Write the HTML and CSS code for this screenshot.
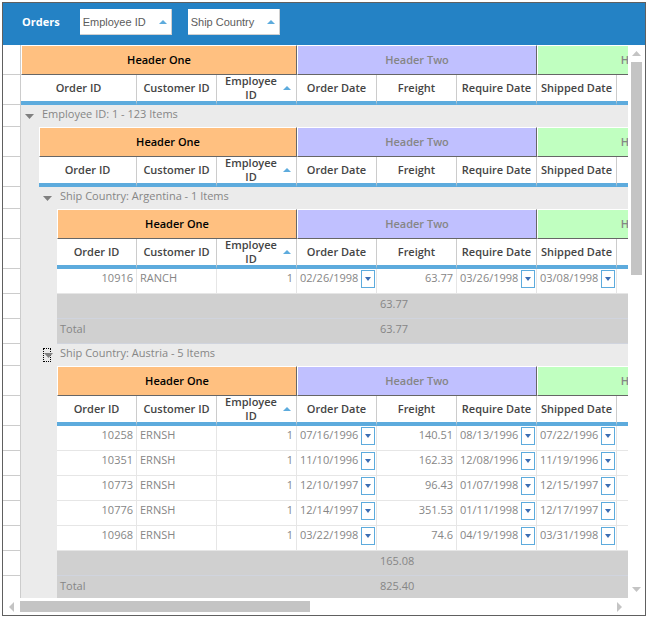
FILE: index.html
```html
<!DOCTYPE html>
<html lang="en">
<head>
<meta charset="utf-8">
<title>Orders</title>
<link rel="stylesheet" href="styles.css">
</head>
<body>
<main class="grid-frame">
  <header class="group-bar">
    <h1 class="caption">Orders</h1>
    <button class="chip" type="button">Employee ID <svg class="up" viewBox="0 0 8 4"><path d="M4 0L8 4H0z"/></svg></button>
    <button class="chip" type="button">Ship Country <svg class="up" viewBox="0 0 8 4"><path d="M4 0L8 4H0z"/></svg></button>
  </header>
  <div class="viewport">
    <table class="grid">
      <colgroup><col class="narrow"><col class="narrow"><col class="narrow"><col span="9"></colgroup>
      <tbody>
        <tr class="band"><td class="rh"></td><th class="one" colspan="5">Header One</th><th class="two" colspan="3">Header Two</th><th class="three" colspan="3">Header Three</th></tr>
        <tr class="cols"><td class="rh"></td><th colspan="3">Order ID</th><th>Customer ID</th><th><span class="sorted">Employee ID <svg class="up" viewBox="0 0 8 4"><path d="M4 0L8 4H0z"/></svg></span></th><th>Order Date</th><th>Freight</th><th>Require Date</th><th>Shipped Date</th><th></th><th></th></tr>
        <tr class="group"><td class="rh"></td><td class="indent"><button class="toggle" type="button" aria-label="Collapse Employee ID 1"><svg viewBox="0 0 9 5"><path d="M0 0H9L4.500 5z"/></svg></button></td><td class="title" colspan="10">Employee ID: 1 - 123 Items</td></tr>

        <tr class="band"><td class="rh"></td><td class="indent"></td><th class="one" colspan="4">Header One</th><th class="two" colspan="3">Header Two</th><th class="three" colspan="3">Header Three</th></tr>
        <tr class="cols"><td class="rh"></td><td class="indent"></td><th colspan="2">Order ID</th><th>Customer ID</th><th><span class="sorted">Employee ID <svg class="up" viewBox="0 0 8 4"><path d="M4 0L8 4H0z"/></svg></span></th><th>Order Date</th><th>Freight</th><th>Require Date</th><th>Shipped Date</th><th></th><th></th></tr>
        <tr class="group"><td class="rh"></td><td class="indent"></td><td class="indent"><button class="toggle" type="button" aria-label="Collapse Argentina"><svg viewBox="0 0 9 5"><path d="M0 0H9L4.500 5z"/></svg></button></td><td class="title" colspan="9">Ship Country: Argentina - 1 Items</td></tr>

        <tr class="band"><td class="rh"></td><td class="indent"></td><td class="indent"></td><th class="one" colspan="3">Header One</th><th class="two" colspan="3">Header Two</th><th class="three" colspan="3">Header Three</th></tr>
        <tr class="cols"><td class="rh"></td><td class="indent"></td><td class="indent"></td><th>Order ID</th><th>Customer ID</th><th><span class="sorted">Employee ID <svg class="up" viewBox="0 0 8 4"><path d="M4 0L8 4H0z"/></svg></span></th><th>Order Date</th><th>Freight</th><th>Require Date</th><th>Shipped Date</th><th></th><th></th></tr>
        <tr class="data"><td class="rh"></td><td class="indent"></td><td class="indent"></td><td class="num">10916</td><td>RANCH</td><td class="num">1</td><td><div class="date">02/26/1998<button class="drop" type="button" aria-label="Pick order date"></button></div></td><td class="num">63.77</td><td><div class="date">03/26/1998<button class="drop" type="button" aria-label="Pick require date"></button></div></td><td><div class="date">03/08/1998<button class="drop" type="button" aria-label="Pick shipped date"></button></div></td><td></td><td></td></tr>
        <tr class="sum"><td class="rh"></td><td class="indent"></td><td class="indent"></td><td></td><td></td><td></td><td></td><td>63.77</td><td></td><td></td><td></td><td></td></tr>
        <tr class="sum"><td class="rh"></td><td class="indent"></td><td class="indent"></td><td>Total</td><td></td><td></td><td></td><td>63.77</td><td></td><td></td><td></td><td></td></tr>
        <tr class="group"><td class="rh"></td><td class="indent"></td><td class="indent"><button class="toggle current" type="button" aria-label="Collapse Austria"><svg viewBox="0 0 9 5"><path d="M0 0H9L4.500 5z"/></svg></button></td><td class="title" colspan="9">Ship Country: Austria - 5 Items</td></tr>

        <tr class="band"><td class="rh"></td><td class="indent"></td><td class="indent"></td><th class="one" colspan="3">Header One</th><th class="two" colspan="3">Header Two</th><th class="three" colspan="3">Header Three</th></tr>
        <tr class="cols"><td class="rh"></td><td class="indent"></td><td class="indent"></td><th>Order ID</th><th>Customer ID</th><th><span class="sorted">Employee ID <svg class="up" viewBox="0 0 8 4"><path d="M4 0L8 4H0z"/></svg></span></th><th>Order Date</th><th>Freight</th><th>Require Date</th><th>Shipped Date</th><th></th><th></th></tr>
        <tr class="data"><td class="rh"></td><td class="indent"></td><td class="indent"></td><td class="num">10258</td><td>ERNSH</td><td class="num">1</td><td><div class="date">07/16/1996<button class="drop" type="button" aria-label="Pick order date"></button></div></td><td class="num">140.51</td><td><div class="date">08/13/1996<button class="drop" type="button" aria-label="Pick require date"></button></div></td><td><div class="date">07/22/1996<button class="drop" type="button" aria-label="Pick shipped date"></button></div></td><td></td><td></td></tr>
        <tr class="data"><td class="rh"></td><td class="indent"></td><td class="indent"></td><td class="num">10351</td><td>ERNSH</td><td class="num">1</td><td><div class="date">11/10/1996<button class="drop" type="button" aria-label="Pick order date"></button></div></td><td class="num">162.33</td><td><div class="date">12/08/1996<button class="drop" type="button" aria-label="Pick require date"></button></div></td><td><div class="date">11/19/1996<button class="drop" type="button" aria-label="Pick shipped date"></button></div></td><td></td><td></td></tr>
        <tr class="data"><td class="rh"></td><td class="indent"></td><td class="indent"></td><td class="num">10773</td><td>ERNSH</td><td class="num">1</td><td><div class="date">12/10/1997<button class="drop" type="button" aria-label="Pick order date"></button></div></td><td class="num">96.43</td><td><div class="date">01/07/1998<button class="drop" type="button" aria-label="Pick require date"></button></div></td><td><div class="date">12/15/1997<button class="drop" type="button" aria-label="Pick shipped date"></button></div></td><td></td><td></td></tr>
        <tr class="data"><td class="rh"></td><td class="indent"></td><td class="indent"></td><td class="num">10776</td><td>ERNSH</td><td class="num">1</td><td><div class="date">12/14/1997<button class="drop" type="button" aria-label="Pick order date"></button></div></td><td class="num">351.53</td><td><div class="date">01/11/1998<button class="drop" type="button" aria-label="Pick require date"></button></div></td><td><div class="date">12/17/1997<button class="drop" type="button" aria-label="Pick shipped date"></button></div></td><td></td><td></td></tr>
        <tr class="data"><td class="rh"></td><td class="indent"></td><td class="indent"></td><td class="num">10968</td><td>ERNSH</td><td class="num">1</td><td><div class="date">03/22/1998<button class="drop" type="button" aria-label="Pick order date"></button></div></td><td class="num">74.6</td><td><div class="date">04/19/1998<button class="drop" type="button" aria-label="Pick require date"></button></div></td><td><div class="date">03/31/1998<button class="drop" type="button" aria-label="Pick shipped date"></button></div></td><td></td><td></td></tr>
        <tr class="sum"><td class="rh"></td><td class="indent"></td><td class="indent"></td><td></td><td></td><td></td><td></td><td>165.08</td><td></td><td></td><td></td><td></td></tr>
        <tr class="sum"><td class="rh"></td><td class="indent"></td><td class="indent"></td><td>Total</td><td></td><td></td><td></td><td>825.40</td><td></td><td></td><td></td><td></td></tr>
      </tbody>
    </table>
  </div>
  <div class="vbar">
    <svg class="v-arrow" viewBox="0 0 9 5"><path d="M4.500 0L9 5H0z"/></svg>
    <div class="v-track"><div class="v-thumb"></div></div>
    <svg class="v-arrow" viewBox="0 0 9 5"><path d="M0 0H9L4.500 5z"/></svg>
  </div>
  <div class="hbar">
    <svg class="h-arrow" viewBox="0 0 5 10"><path d="M5 0V10L0 5z"/></svg>
    <div class="h-track"><div class="h-thumb"></div></div>
    <svg class="h-arrow" viewBox="0 0 5 10"><path d="M0 0L5 5L0 10z"/></svg>
  </div>
</main>
</body>
</html>
```
FILE: styles.css
```css
* { box-sizing: border-box; }

body {
  margin: 0;
  padding: 2px 3px 3px 2px;
  height: 100vh;
  background: #fff;
  font: 11px/14px "Open Sans", "Noto Sans", sans-serif;
  color: #868686;
}

button {
  margin: 0;
  padding: 0;
  border: 0;
  background: none;
  font: inherit;
  color: inherit;
}

svg { display: block; flex: none; }

.grid-frame {
  display: grid;
  grid-template: auto minmax(0, 1fr) 17px / minmax(0, 1fr) 17px;
  height: 100%;
  border: 1px solid #606060;
}

.group-bar {
  grid-column: 1 / -1;
  display: flex;
  gap: 16px;
  height: 42px;
  padding: 6px 19px;
  background: #2482c5;
}

.caption {
  margin: 0 4px 0 0;
  font-size: 11px;
  line-height: 26px;
  color: #fff;
}

.chip {
  display: flex;
  align-items: center;
  gap: 13px;
  height: 26px;
  padding: 0 4px 0 3px;
  border: solid #d0d0d0;
  border-width: 0 1px 1px 0;
  background: #fff;
  color: #5c5c5c;
  font: 11px/24px "Liberation Sans", Arial, sans-serif;
}

.up { width: 8px; height: 4px; fill: #5dabdd; }

.viewport { overflow: hidden; }

.grid {
  width: 774px;
  table-layout: fixed;
  border-spacing: 0;
}

.narrow { width: 18px; }

th, td { padding: 0; }

th { font-weight: 600; }

.grid .rh {
  background: #fff;
  border: solid #ccc;
  border-width: 0 1px 1px 0;
}

.grid .indent {
  padding: 0;
  border: 0;
  background: #ebebeb;
  vertical-align: middle;
}

.band { height: 30px; }

.band th {
  border: 1px solid #666;
  border-top-color: #fff;
  border-left-color: #fff;
}

.band .one { background: #ffc080; color: #000; }
.band .two { background: #c0c0ff; }
.band .three { background: #c0ffc0; }

.cols { height: 30px; }

.cols th {
  height: 30px;
  border-right: 1px solid #ccc;
  border-bottom: 4px solid #5dabdd;
  color: #444;
  background: #fff;
}

.sorted {
  display: flex;
  align-items: center;
  gap: 2px;
  height: 26px;
  padding: 0 5px 0 4px;
}

.group { height: 22px; }

.group .title {
  padding: 0 3px 4px;
  background: #ebebeb;
}

.toggle {
  display: grid;
  place-items: center;
  width: 9px;
  height: 14px;
  margin: 0 4px;
}

.toggle svg { width: 9px; height: 5px; fill: #808080; }

.toggle.current {
  width: 8px;
  border: 1px dotted #000;
}

.data, .sum { height: 25px; }

.data td {
  padding: 1px 3px 5px;
  border: solid #e6e6e6;
  border-width: 0 1px 1px 0;
  line-height: 16px;
  vertical-align: top;
}

.data .num { text-align: right; }

.date {
  display: flex;
  justify-content: space-between;
  height: 18px;
  margin-right: -2px;
}

.drop {
  display: grid;
  place-items: center;
  width: 14px;
  height: 18px;
  border: 1px solid #5dabdd;
}

.drop::before {
  content: "";
  width: 6px;
  height: 4px;
  background: #3c6eb4;
  clip-path: polygon(0 0, 100% 0, 50% 100%);
}

.sum td {
  padding: 0 3px 4px;
  border: solid #d0d4de;
  border-width: 0 0 1px;
  background: #d0d0d0;
}

.vbar {
  grid-row: 2 / 4;
  grid-column: 2;
  display: flex;
  flex-direction: column;
  align-items: center;
  gap: 6px;
  padding: 6px 0 23px;
}

.v-arrow { width: 9px; height: 5px; fill: #c4c4c4; }
.v-track { flex: 1; width: 11px; }
.v-thumb { height: 41%; background: #c4c4c4; }

.hbar {
  grid-row: 3;
  grid-column: 1;
  display: flex;
  align-items: center;
  gap: 6px;
  padding: 0 6px;
}

.h-arrow { width: 5px; height: 10px; fill: #c4c4c4; }
.h-track { flex: 1; height: 11px; }
.h-thumb { width: 49%; height: 100%; background: #c4c4c4; }
```
